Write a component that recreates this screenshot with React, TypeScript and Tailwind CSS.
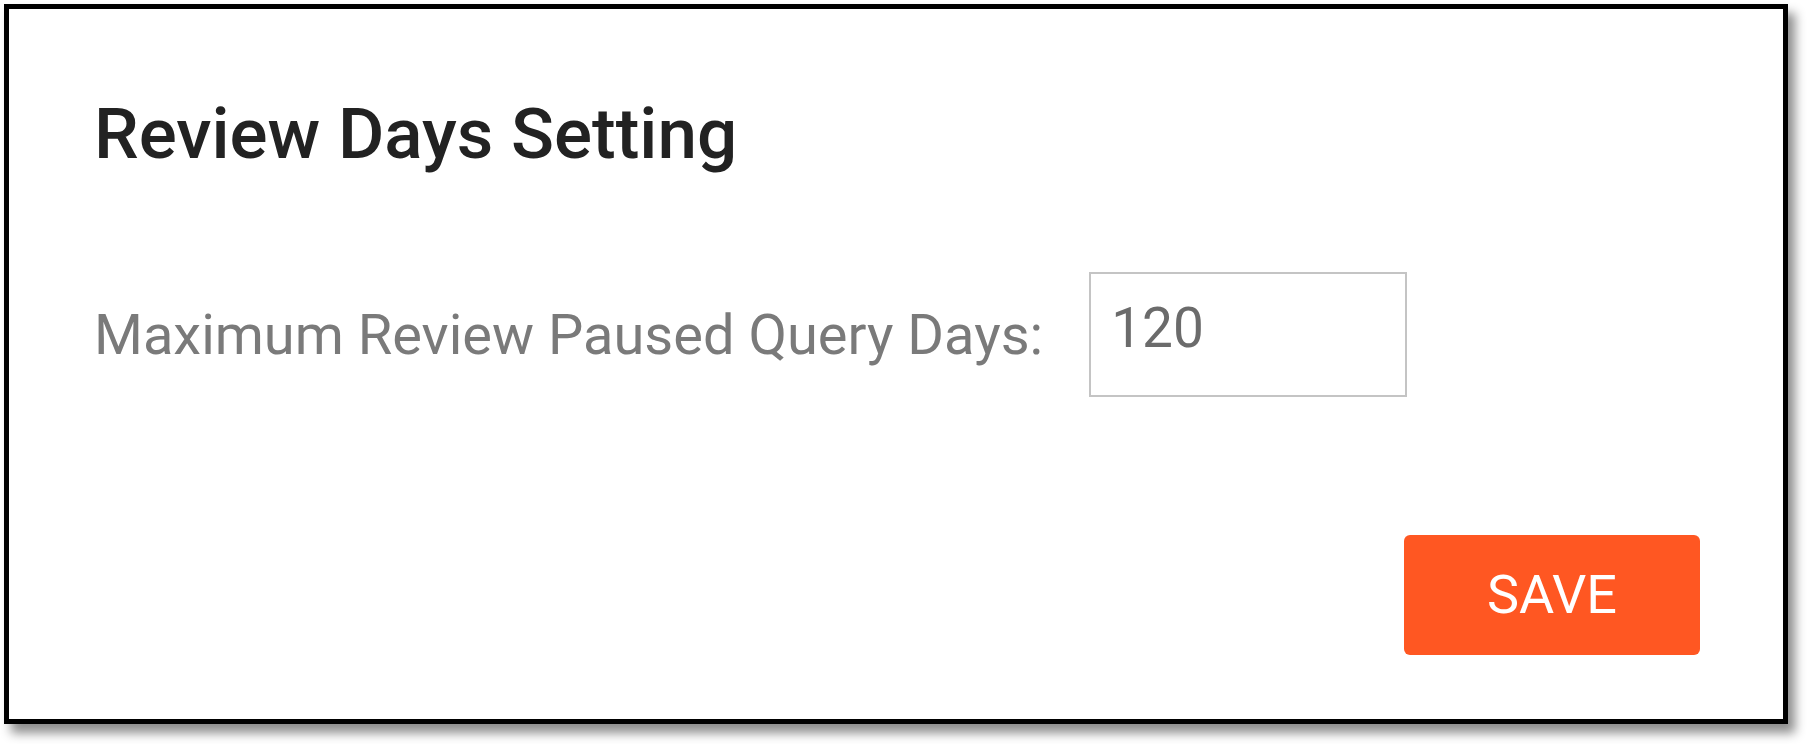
export default function App() {
  return (
    <div className="w-[1808px] h-[744px] bg-white pt-[4px] pl-[4px] font-['Roboto',sans-serif]">
      <div className="w-[1784px] h-[720px] border-[5px] border-black bg-white shadow-[7px_9px_10px_rgba(0,0,0,0.45)] pl-[85px] pr-[83px] pt-[89px] flex flex-col">
        <h1 className="text-[71px] leading-none font-medium text-[#222222]">Review Days Setting</h1>

        <div className="mt-[103px] flex items-center">
          <label className="text-[56px] leading-none text-[#7a7a7a]">Maximum Review Paused Query Days:</label>
          <div className="ml-[46px] w-[318px] h-[125px] border-2 border-[#c4c4c4] pl-[20px] pt-[27px]">
            <span className="text-[55px] leading-none text-[#6b6b6b]">120</span>
          </div>
        </div>

        <div className="mt-[138px] flex justify-end">
          <button className="w-[296px] h-[120px] rounded-[6px] bg-[#ff5722] text-white text-[54px] leading-none">
            SAVE
          </button>
        </div>
      </div>
    </div>
  );
}
